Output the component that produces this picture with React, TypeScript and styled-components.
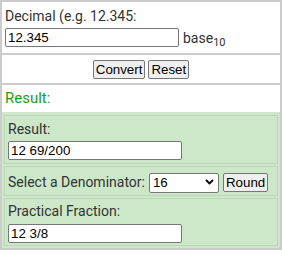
import { useState } from "react";
import styled, { createGlobalStyle } from "styled-components";

const Global = createGlobalStyle`
  body {
    margin: 0;
    background: #fff;
    font-family: Roboto, "Liberation Sans", Arial, sans-serif;
    color: #333;
  }
`

const Panel = styled.div`
  width: 282px;
  box-sizing: border-box;
  border: 2px solid #ccc;
  background: #fff;
`

const Row = styled.div<{ $pad: string }>`
  padding: ${({ $pad }) => $pad};
  & + & {
    border-top: 2px solid #ccc;
  }
`

const Label = styled.div<{ $size?: string; $color?: string }>`
  font-size: ${({ $size }) => $size || "14px"};
  line-height: 18px;
  color: ${({ $color }) => $color || "#333"};
`

const Line = styled.div<{ $gap?: string; $mt?: string }>`
  display: flex;
  align-items: center;
  gap: ${({ $gap }) => $gap || "4px"};
  margin-top: ${({ $mt }) => $mt || "0"};
`

const Centered = styled(Line)`
  justify-content: center;
`

const TextInput = styled.input`
  width: 174px;
  height: 19px;
  box-sizing: border-box;
  margin: 0;
  padding: 1px 2px;
  border: 1px solid #767676;
  border-radius: 2px;
  font-family: "Liberation Sans", Arial, sans-serif;
  font-size: 13.33px;
  color: #000;
  background: #fff;
  outline: none;
`

const Button = styled.button`
  height: 19px;
  box-sizing: border-box;
  margin: 0;
  padding: 1px 2px;
  border: 1px solid #767676;
  border-radius: 2px;
  background: #efefef;
  font-family: "Liberation Sans", Arial, sans-serif;
  font-size: 13.33px;
  line-height: 15px;
  color: #000;
  white-space: nowrap;
  cursor: pointer;
`

const Base = styled.span`
  font-size: 14px;
  color: #333;
  sub {
    font-size: 11px;
    vertical-align: -3px;
    line-height: 0;
  }
`

const Green = styled.div`
  background: #cce8c9;
  padding: 3px 2px 2px;
  display: flex;
  flex-direction: column;
  gap: 2px;
`

const Cell = styled.div<{ $pad: string }>`
  border: 1px solid #bfd6bc;
  padding: ${({ $pad }) => $pad};
`

const SelectWrap = styled.div`
  position: relative;
  width: 70px;
  height: 20px;
`

const Select = styled.select`
  width: 100%;
  height: 100%;
  box-sizing: border-box;
  margin: 0;
  padding: 0 0 0 3px;
  border: 1px solid #767676;
  border-radius: 2px;
  background: #fff;
  appearance: none;
  font-family: "Liberation Sans", Arial, sans-serif;
  font-size: 13.33px;
  color: #000;
  outline: none;
`

const Chevron = styled.svg`
  position: absolute;
  right: 5px;
  top: 7px;
  width: 9px;
  height: 6px;
  pointer-events: none;
`

export default function App() {
  const [dec, setDec] = useState("12.345")
  const [den, setDen] = useState("16")
  return (
    <>
      <Global />
      <Panel>
        <Row $pad="5px 3px 6px">
          <Label>Decimal (e.g. 12.345:</Label>
          <Line $mt="3px">
            <TextInput value={dec} onChange={(e) => setDec(e.target.value)} />
            <Base>
              base<sub>10</sub>
            </Base>
          </Line>
        </Row>
        <Row $pad="5px 3px 4px">
          <Centered $gap="3px">
            <Button>Convert</Button>
            <Button>Reset</Button>
          </Centered>
        </Row>
        <Row $pad="4px 3px 5px">
          <Label $size="15px" $color="#16a016">Result:</Label>
        </Row>
        <Green>
          <Cell $pad="4px 3px 3px">
            <Label>Result:</Label>
            <Line $mt="3px">
              <TextInput defaultValue="12 69/200" />
            </Line>
          </Cell>
          <Cell $pad="5px 3px 3px">
            <Line>
              <Label>Select a Denominator:</Label>
              <SelectWrap>
                <Select value={den} onChange={(e) => setDen(e.target.value)}>
                  {["2", "4", "8", "16", "32", "64"].map((d) => (
                    <option key={d}>{d}</option>
                  ))}
                </Select>
                <Chevron viewBox="0 0 9 6">
                  <path d="M1 1l3.5 3.5L8 1" fill="none" stroke="#000" strokeWidth="1.8" />
                </Chevron>
              </SelectWrap>
              <Button>Round</Button>
            </Line>
          </Cell>
          <Cell $pad="3px 3px 2px">
            <Label>Practical Fraction:</Label>
            <Line $mt="4px">
              <TextInput defaultValue="12 3/8" />
            </Line>
          </Cell>
        </Green>
      </Panel>
    </>
  )
}
